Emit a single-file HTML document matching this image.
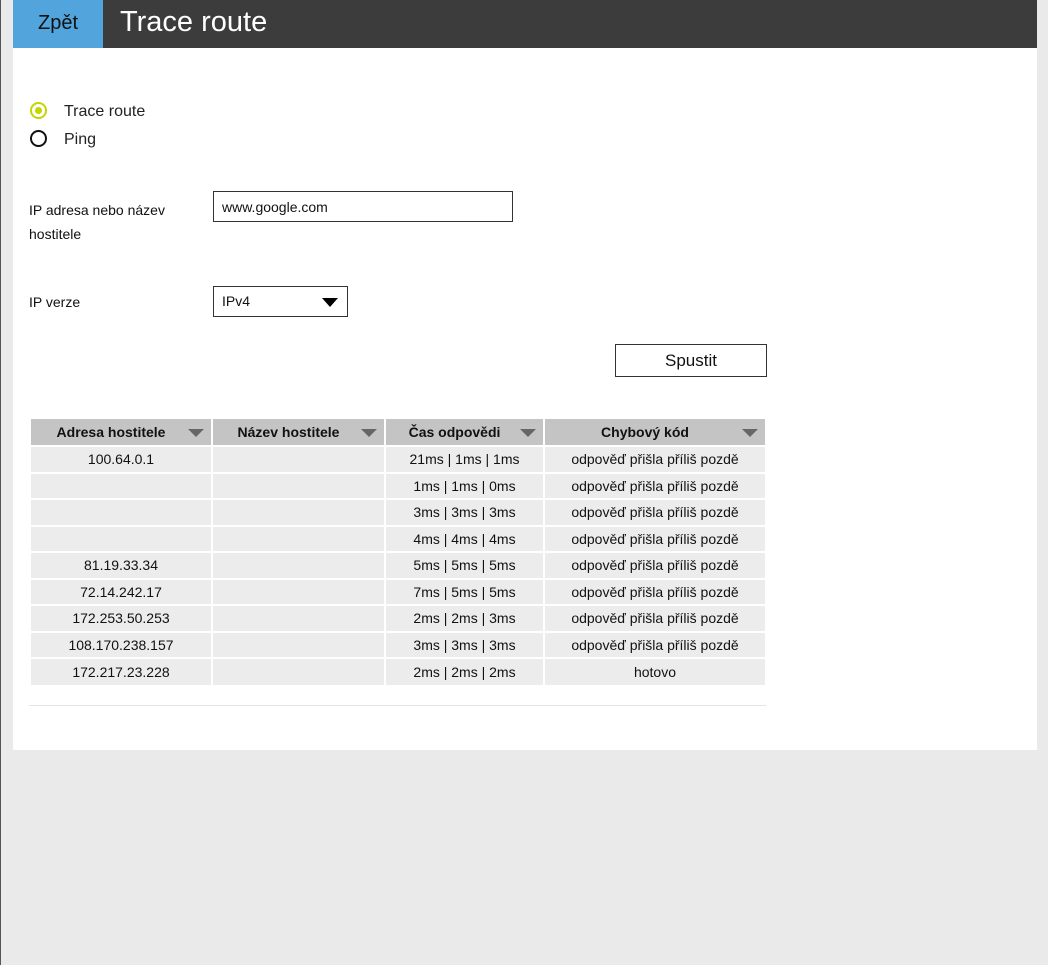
<!DOCTYPE html>
<html><head><meta charset="utf-8"><style>
*{margin:0;padding:0;box-sizing:border-box}
body{width:1048px;height:965px;background:#eaeaea;font-family:"Liberation Sans",Arial,sans-serif;position:relative;overflow:hidden}
.abs{position:absolute}
#lb{left:0;top:0;width:1px;height:965px;background:#555}
#hdr{left:13px;top:0;width:1024px;height:48px;background:#3c3c3c}
#back{left:13px;top:0;width:90px;height:48px;background:#52a4dc;color:#111;font-size:20px;text-align:center;line-height:46px}
#title{left:120px;top:6px;color:#fff;font-size:29px}
#panel{left:13px;top:48px;width:1024px;height:702px;background:#fff}
.t{font-size:16px;color:#222}
.radio{width:17px;height:17px;border-radius:50%;border:2px solid #111}
.radio.on{border-color:#c3d600}
.radio.on:after{content:"";position:absolute;left:3px;top:3px;width:7px;height:7px;border-radius:50%;background:#c3d600}
.box{border:1px solid #333;background:#fff;font-size:14px;color:#111}
table{position:absolute;left:29px;top:417px;border-collapse:collapse;font-size:14px;color:#111}
td,th{border:2px solid #fff;height:26.5px;text-align:center;background:#ececec;padding:0}
th{background:#c4c4c4;font-weight:bold;height:28px;position:relative;padding-right:20px}
th span.ar{position:absolute;right:7px;top:10px;width:0;height:0;border-left:8px solid transparent;border-right:8px solid transparent;border-top:8px solid #666}
</style></head><body>
<div id="lb" class="abs"></div>
<div id="hdr" class="abs"></div>
<div id="back" class="abs">Zpět</div>
<div id="title" class="abs">Trace route</div>
<div id="panel" class="abs"></div>
<div class="abs radio on" style="left:30px;top:102px"></div>
<div class="abs t" style="left:64px;top:103px">Trace route</div>
<div class="abs radio" style="left:30px;top:130px"></div>
<div class="abs t" style="left:64px;top:131px">Ping</div>
<div class="abs" style="left:29px;top:198px;font-size:14px;line-height:24px;color:#111">IP adresa nebo název<br>hostitele</div>
<div class="abs box" style="left:213px;top:191px;width:300px;height:31px;padding:7px 8px">www.google.com</div>
<div class="abs" style="left:29px;top:294px;font-size:14px;color:#111">IP verze</div>
<div class="abs box" style="left:213px;top:286px;width:135px;height:31px;padding:6px 8px">IPv4<span class="abs" style="right:9px;top:11px;border-left:8px solid transparent;border-right:8px solid transparent;border-top:9px solid #000"></span></div>
<div class="abs box" style="left:615px;top:344px;width:152px;height:33px;text-align:center;line-height:31px;font-size:17px">Spustit</div>
<table>
<tr><th style="width:182px">Adresa hostitele<span class="ar"></span></th><th style="width:173px">Název hostitele<span class="ar"></span></th><th style="width:159px">Čas odpovědi<span class="ar"></span></th><th style="width:222px">Chybový kód<span class="ar"></span></th></tr>
<tr><td>100.64.0.1</td><td></td><td>21ms | 1ms | 1ms</td><td>odpověď přišla příliš pozdě</td></tr>
<tr><td></td><td></td><td>1ms | 1ms | 0ms</td><td>odpověď přišla příliš pozdě</td></tr>
<tr><td></td><td></td><td>3ms | 3ms | 3ms</td><td>odpověď přišla příliš pozdě</td></tr>
<tr><td></td><td></td><td>4ms | 4ms | 4ms</td><td>odpověď přišla příliš pozdě</td></tr>
<tr><td>81.19.33.34</td><td></td><td>5ms | 5ms | 5ms</td><td>odpověď přišla příliš pozdě</td></tr>
<tr><td>72.14.242.17</td><td></td><td>7ms | 5ms | 5ms</td><td>odpověď přišla příliš pozdě</td></tr>
<tr><td>172.253.50.253</td><td></td><td>2ms | 2ms | 3ms</td><td>odpověď přišla příliš pozdě</td></tr>
<tr><td>108.170.238.157</td><td></td><td>3ms | 3ms | 3ms</td><td>odpověď přišla příliš pozdě</td></tr>
<tr><td style="border-bottom:0">172.217.23.228</td><td style="border-bottom:0"></td><td style="border-bottom:0">2ms | 2ms | 2ms</td><td style="border-bottom:0">hotovo</td></tr>
</table>
<div class="abs" style="left:29px;top:705px;width:737px;height:1px;background:#e4e4e4"></div>
</body></html>
